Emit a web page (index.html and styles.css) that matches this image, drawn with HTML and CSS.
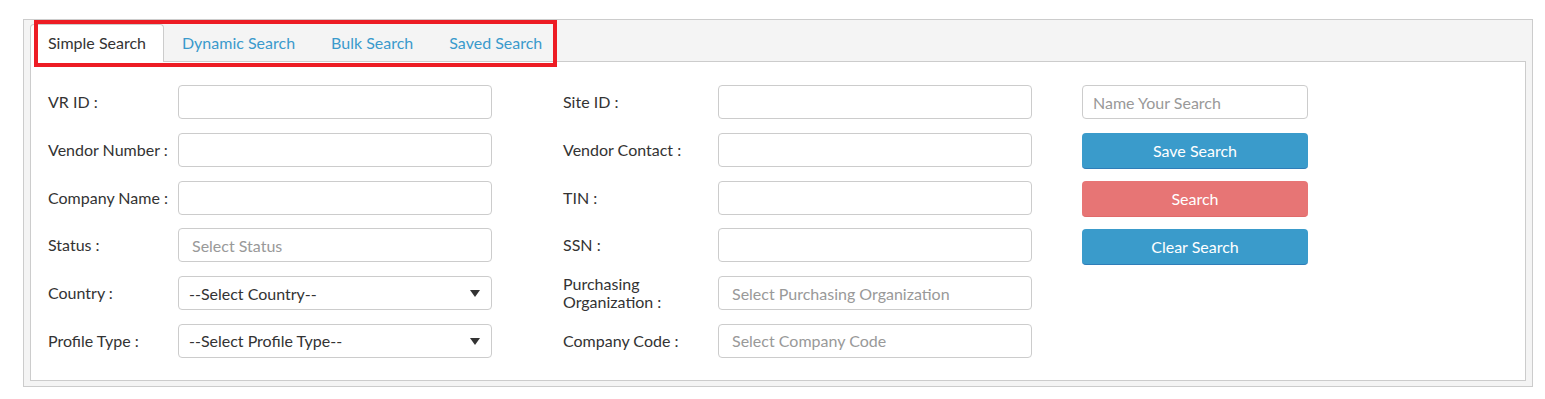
FILE: index.html
```html
<!DOCTYPE html>
<html lang="en">
  <head>
    <meta charset="UTF-8" />
    <meta name="viewport" content="width=device-width, initial-scale=1.0" />
    <title>Vendor Search</title>
    <link rel="stylesheet" href="styles.css">
  </head>
  <body>
    <div class="search-box">
      <div class="tabs">
        <a class="tab active" href="#">Simple Search</a>
        <a class="tab" href="#">Dynamic Search</a>
        <a class="tab" href="#">Bulk Search</a>
        <a class="tab" href="#">Saved Search</a>
        <div class="highlight"></div>
      </div>

      <div class="panel">
        <div class="fields col-one">
          <label for="vrId">VR ID :</label>
          <input type="text" id="vrId" />

          <label for="vendorNumber">Vendor Number :</label>
          <input type="text" id="vendorNumber" />

          <label for="companyName">Company Name :</label>
          <input type="text" id="companyName" />

          <label for="status">Status :</label>
          <input type="text" id="status" class="picker" placeholder="Select Status" />

          <label for="country">Country :</label>
          <div class="select-wrap">
            <select id="country">
              <option>--Select Country--</option>
            </select>
            <svg class="arrow" width="10" height="7" viewBox="0 0 10 7"><path d="M0 0h10L5 7z" fill="#333"/></svg>
          </div>

          <label for="profileType">Profile Type :</label>
          <div class="select-wrap">
            <select id="profileType">
              <option>--Select Profile Type--</option>
            </select>
            <svg class="arrow" width="10" height="7" viewBox="0 0 10 7"><path d="M0 0h10L5 7z" fill="#333"/></svg>
          </div>
        </div>

        <div class="fields col-two">
          <label for="siteId">Site ID :</label>
          <input type="text" id="siteId" />

          <label for="vendorContact">Vendor Contact :</label>
          <input type="text" id="vendorContact" />

          <label for="tin">TIN :</label>
          <input type="text" id="tin" />

          <label for="ssn">SSN :</label>
          <input type="text" id="ssn" />

          <label for="purchOrg">Purchasing Organization :</label>
          <input type="text" id="purchOrg" class="picker" placeholder="Select Purchasing Organization" />

          <label for="companyCode">Company Code :</label>
          <input type="text" id="companyCode" class="picker" placeholder="Select Company Code" />
        </div>

        <div class="actions">
          <input type="text" class="name-search" placeholder="Name Your Search" />
          <button class="btn btn-blue">Save Search</button>
          <button class="btn btn-red">Search</button>
          <button class="btn btn-blue">Clear Search</button>
        </div>
      </div>
    </div>
  </body>
</html>
```

FILE: styles.css
```css
body {
  font-family: Lato, "Open Sans", sans-serif;
  font-size: 16px;
  color: #333;
  margin: 0;
  background: #fff;
}

.search-box {
  margin: 19px 12px 0 23px;
  background: #f4f4f4;
  border: 1px solid #ccc;
  padding: 4px 6px 5px 6px;
}

.tabs {
  position: relative;
  display: flex;
}

.tab {
  display: block;
  padding: 8px 17px;
  line-height: 20px;
  color: #3a9acc;
  text-decoration: none;
  border: 1px solid transparent;
  border-bottom: none;
  margin-bottom: -1px;
}

.tab.active {
  background: #fff;
  color: #333;
  border-color: #ccc;
  border-radius: 4px 4px 0 0;
  padding: 8px 17px 9px;
  position: relative;
  z-index: 1;
}

.highlight {
  position: absolute;
  left: 4px;
  top: -4px;
  width: 515px;
  height: 39px;
  border: 4px solid #ed1c24;
  z-index: 2;
  pointer-events: none;
}

.panel {
  background: #fff;
  border: 1px solid #ccc;
  padding: 23px 17px 22px;
  display: flex;
  align-items: flex-start;
}

.fields {
  display: grid;
  grid-auto-rows: 34px;
  row-gap: 13.8px;
  align-items: center;
}

.col-one {
  grid-template-columns: 130px 314px;
}

.col-two {
  grid-template-columns: 155px 314px;
  margin-left: 71px;
}

.fields label {
  line-height: 18px;
  white-space: nowrap;
}

.col-two label:nth-of-type(5) {
  white-space: normal;
}

input[type="text"],
select {
  box-sizing: border-box;
  width: 100%;
  height: 34px;
  border: 1px solid #ccc;
  border-radius: 4px;
  font-family: inherit;
  font-size: 16px;
  color: #333;
  padding: 0 10px;
  background: #fff;
}

input::placeholder {
  color: #999;
}

input.picker {
  padding-left: 13px;
}

.select-wrap {
  position: relative;
  height: 34px;
}

select {
  appearance: none;
  -webkit-appearance: none;
}

.arrow {
  position: absolute;
  right: 12px;
  top: 14px;
  pointer-events: none;
}

.actions {
  display: flex;
  flex-direction: column;
  gap: 12px;
  width: 226px;
  margin-left: 50px;
}

.actions .name-search {
  margin-bottom: 2px;
}

.btn {
  height: 36px;
  border: none;
  border-radius: 4px;
  font-family: inherit;
  font-size: 16px;
  color: #fff;
  cursor: pointer;
}

.btn-blue {
  background-color: #3a9bcb;
  border-bottom: 1px solid #2f7db8;
}

.btn-red {
  background-color: #e77575;
  border-bottom: 1px solid #e06a6a;
}
```
